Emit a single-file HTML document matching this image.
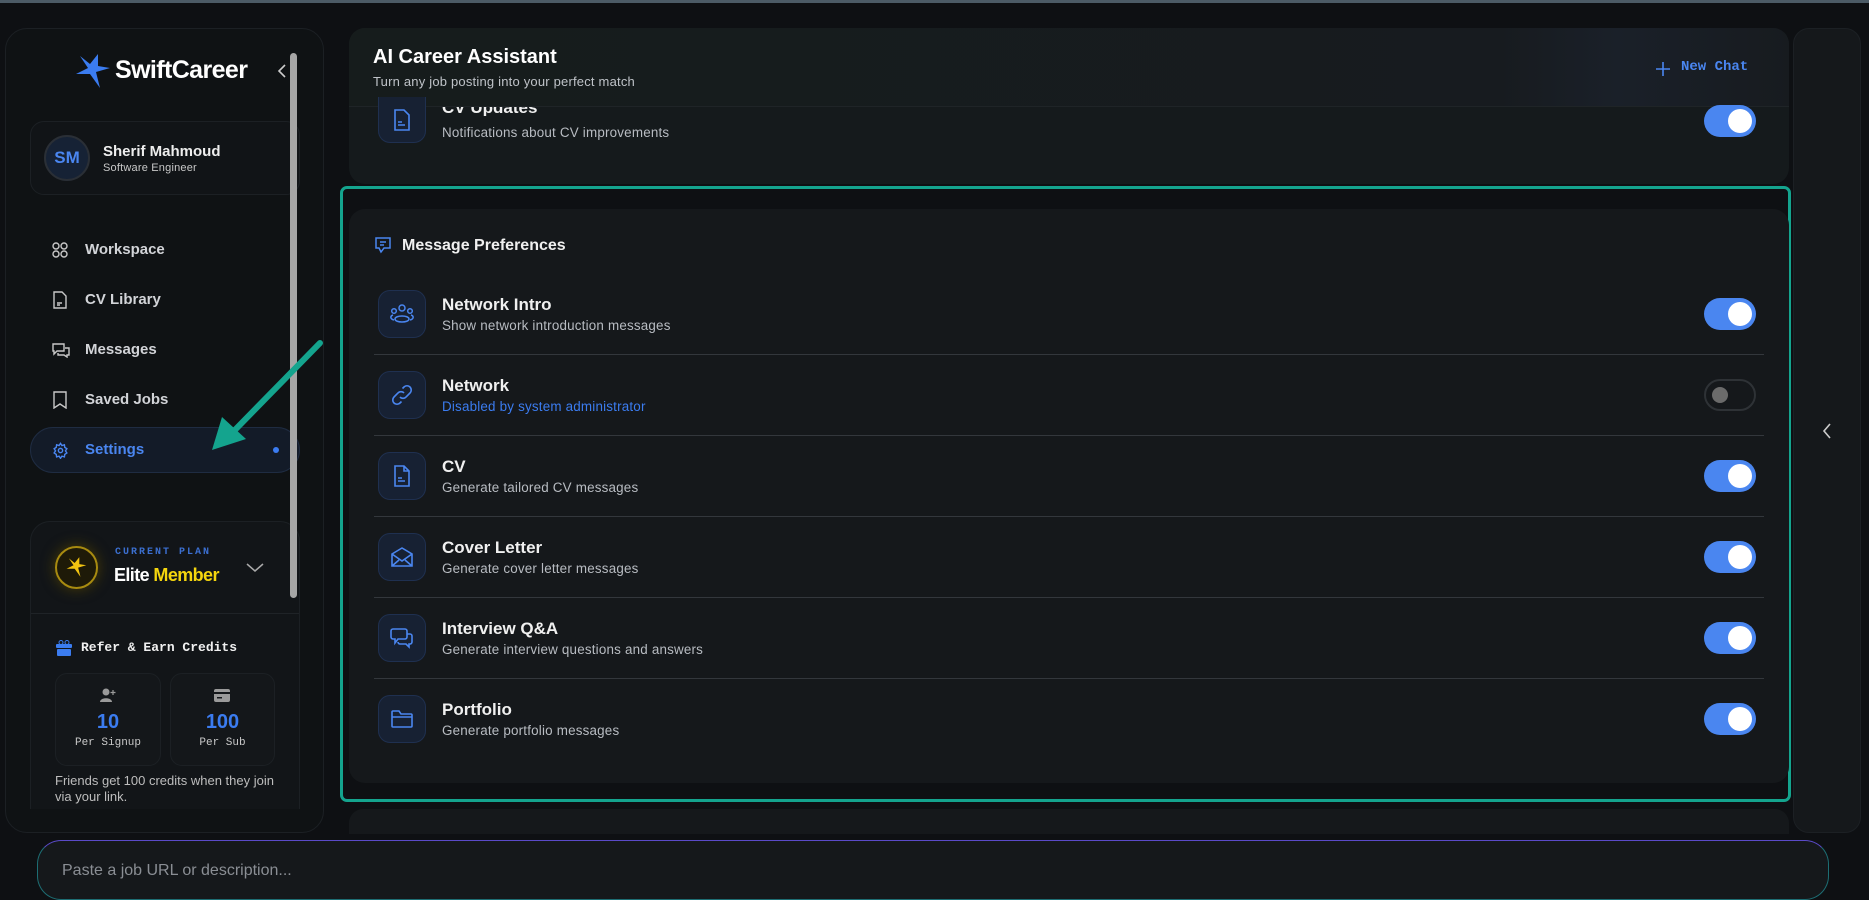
<!DOCTYPE html>
<html><head><meta charset="utf-8"><style>
*{box-sizing:border-box;margin:0;padding:0}
body{width:1869px;height:879px;overflow:hidden;background:#0e1013;font-family:"Liberation Sans",sans-serif;color:#e8e8e8;position:relative}
.a{position:absolute}
.mono{font-family:"Liberation Mono",monospace}
.card{background:#15181b;border-radius:16px}
.ib{position:absolute;left:378px;width:48px;height:48px;border-radius:12px;background:#172133;border:1px solid #1f3050;display:flex;align-items:center;justify-content:center}
.ttl{position:absolute;left:442px;font-size:17px;font-weight:bold;color:#f0f0f0}
.dsc{position:absolute;left:442px;font-size:13.4px;color:#b8bcc2;letter-spacing:0.2px}
.tg{position:absolute;left:1704px;width:52px;height:32px;border-radius:16px;background:#4a86f0}
.tg::after{content:"";position:absolute;right:4px;top:4px;width:24px;height:24px;border-radius:50%;background:#fff}
.dv{position:absolute;left:374px;width:1390px;height:1px;background:#33373c}
.nav{position:absolute;left:85px;font-size:15px;font-weight:bold;color:#d2d4d8}
.ni{position:absolute;left:52px}
</style></head><body>
<div class="a" style="left:0;top:0;width:1869px;height:3px;background:#4c5b66"></div>

<!-- sidebar -->
<div class="a" style="left:5px;top:28px;width:319px;height:805px;border-radius:22px;background:#0f1214;border:1px solid #1c2024"></div>
<svg class="a" style="left:76px;top:52px" width="36" height="38" viewBox="0 0 36 38"><path d="M4 4 L14 12 L22 2 L22 14 L34 16 L20 20 L24 36 L14 22 L0 22 L12 16 Z" fill="#3b7cf0"/></svg>
<div class="a" style="left:115px;top:56px;font-size:25px;font-weight:bold;color:#fff;letter-spacing:-0.6px">SwiftCareer</div>
<svg class="a" style="left:276px;top:63px" width="12" height="16"><path d="M9 2 L3 8 L9 14" stroke="#ccc" stroke-width="1.6" fill="none"/></svg>

<div class="a" style="left:30px;top:121px;width:270px;height:74px;border-radius:14px;background:#111417;border:1px solid #1c2024"></div>
<div class="a" style="left:44px;top:135px;width:46px;height:46px;border-radius:50%;background:#162235;border:2px solid #2a2f36;color:#4a86f0;font-size:17px;font-weight:bold;display:flex;align-items:center;justify-content:center">SM</div>
<div class="a" style="left:103px;top:143px;font-size:15px;font-weight:bold;color:#eee">Sherif Mahmoud</div>
<div class="a" style="left:103px;top:162px;font-size:11px;color:#c8c8c8;letter-spacing:0.2px">Software Engineer</div>

<svg class="ni" style="top:242px" width="16" height="16" fill="none" stroke="#c8c8c8" stroke-width="1.4"><circle cx="4" cy="4" r="3"/><circle cx="12" cy="4" r="3"/><circle cx="4" cy="12" r="3"/><circle cx="12" cy="12" r="3"/></svg>
<div class="nav" style="top:241px">Workspace</div>
<svg class="ni" style="top:291px" width="16" height="18" fill="none" stroke="#c8c8c8" stroke-width="1.4"><path d="M2 1h8l4 4v12H2z M5 12h5 M5 14h3"/></svg>
<div class="nav" style="top:291px">CV Library</div>
<svg class="ni" style="top:342px" width="18" height="16" fill="none" stroke="#c8c8c8" stroke-width="1.4"><path d="M1 2h11v7H5l-3 3V9H1z M6 11v2h6l3 2v-2h2V6h-4"/></svg>
<div class="nav" style="top:341px">Messages</div>
<svg class="ni" style="top:391px" width="16" height="18" fill="none" stroke="#c8c8c8" stroke-width="1.4"><path d="M2 1h12v16l-6-4-6 4z"/></svg>
<div class="nav" style="top:391px">Saved Jobs</div>
<div class="a" style="left:30px;top:427px;width:270px;height:46px;border-radius:23px;background:#131b28;border:1px solid #1f2c42"></div>
<svg class="ni" style="top:442px" width="17" height="17" viewBox="0 0 24 24" fill="none" stroke="#4a86f0" stroke-width="2"><circle cx="12" cy="12" r="3"/><path d="M12 2l2 3 3.5-1 .5 3.5 3 2-2 3 2 3-3 2-.5 3.5-3.5-1-2 3-2-3-3.5 1-.5-3.5-3-2 2-3-2-3 3-2 .5-3.5 3.5 1z"/></svg>
<div class="nav" style="top:441px;color:#4a86f0">Settings</div>
<div class="a" style="left:273px;top:447px;width:6px;height:6px;border-radius:50%;background:#3b7cf0"></div>

<!-- plan card -->
<div class="a" style="left:30px;top:521px;width:270px;height:288px;border-radius:20px 20px 0 0;background:#121518;border:1px solid #1c2024;border-bottom:none"></div>
<div class="a" style="left:31px;top:613px;width:268px;height:1px;background:#1f2327"></div>
<div class="a" style="left:55px;top:546px;width:43px;height:43px;border-radius:50%;border:2px solid #a88b10;background:#1e1a08;box-shadow:0 0 14px #4a3d05"></div>
<svg class="a" style="left:66px;top:556px" width="22" height="22" viewBox="0 0 36 38"><path d="M4 4 L14 12 L22 2 L22 14 L34 16 L20 20 L24 36 L14 22 L0 22 L12 16 Z" fill="#f2c410"/></svg>
<div class="a mono" style="left:115px;top:547px;font-size:10px;letter-spacing:2px;color:#3b6fd0;font-weight:bold">CURRENT PLAN</div>
<div class="a" style="left:114px;top:565px;font-size:18px;font-weight:bold;letter-spacing:-0.6px"><span style="color:#fff">Elite </span><span style="color:#f5d60e">Member</span></div>
<svg class="a" style="left:246px;top:563px" width="18" height="10"><path d="M1 1l8 7 8-7" stroke="#aaa" stroke-width="1.5" fill="none"/></svg>
<svg class="a" style="left:56px;top:640px" width="16" height="16" fill="#3b7cf0"><rect x="0" y="4" width="16" height="4" rx="1"/><rect x="1" y="9" width="14" height="7" rx="1"/><circle cx="5" cy="2.5" r="2" fill="none" stroke="#3b7cf0"/><circle cx="11" cy="2.5" r="2" fill="none" stroke="#3b7cf0"/></svg>
<div class="a mono" style="left:81px;top:640px;font-size:13px;font-weight:bold;color:#f0f0f0">Refer &amp; Earn Credits</div>
<div class="a" style="left:55px;top:673px;width:106px;height:93px;border-radius:12px;background:#14171a;border:1px solid #1c2024"></div>
<div class="a" style="left:170px;top:673px;width:105px;height:93px;border-radius:12px;background:#14171a;border:1px solid #1c2024"></div>
<svg class="a" style="left:100px;top:688px" width="16" height="14" fill="#9a9a9a"><circle cx="6" cy="4" r="3.5"/><path d="M0 14c0-5 12-5 12 0z"/><path d="M13 2v5M10.5 4.5h5" stroke="#9a9a9a" stroke-width="1.2"/></svg>
<svg class="a" style="left:214px;top:689px" width="16" height="13"><rect width="16" height="13" rx="2" fill="#9a9a9a"/><rect y="3" width="16" height="2" fill="#14171a"/><rect x="3" y="8" width="5" height="1.5" fill="#14171a"/></svg>
<div class="a" style="left:55px;top:711px;width:106px;text-align:center;font-size:20px;font-weight:bold;color:#3b7cf0">10</div>
<div class="a" style="left:170px;top:711px;width:105px;text-align:center;font-size:20px;font-weight:bold;color:#3b7cf0">100</div>
<div class="a mono" style="left:55px;top:737px;width:106px;text-align:center;font-size:11px;color:#c8c8c8">Per Signup</div>
<div class="a mono" style="left:170px;top:737px;width:105px;text-align:center;font-size:11px;color:#c8c8c8">Per Sub</div>
<div class="a" style="left:55px;top:773px;width:225px;font-size:13px;line-height:16px;color:#bdbdbd">Friends get 100 credits when they join via your link.</div>

<div class="a" style="left:290px;top:53px;width:7px;height:545px;border-radius:4px;background:#a6a6a6"></div>

<!-- main header card -->
<div class="a card" style="left:349px;top:28px;width:1440px;height:156px;background:#151a1c"></div>
<div class="a" style="left:349px;top:28px;width:1440px;height:79px;border-radius:16px 16px 0 0;background:linear-gradient(90deg,#161c1c,#171b1f 80%,#1a2029 88%,#171b1f);border-bottom:1px solid #1f2427"></div>
<div class="a" style="left:373px;top:46px;font-size:20px;font-weight:bold;color:#fff">AI Career Assistant</div>
<div class="a" style="left:373px;top:74px;font-size:13px;color:#bfc3c8;letter-spacing:0.2px">Turn any job posting into your perfect match</div>
<svg class="a" style="left:1655px;top:61px" width="16" height="16"><path d="M8 1v14M1 8h14" stroke="#4a86f0" stroke-width="1.6"/></svg>
<div class="a mono" style="left:1681px;top:59px;font-size:14px;font-weight:bold;color:#4a86f0">New Chat</div>
<div class="ib" style="top:97px;height:46px;border-top:none;border-radius:0 0 12px 12px"><svg width="18" height="22" fill="none" stroke="#4a86f0" stroke-width="1.6"><path d="M2 1h9l5 5v15H2z M5 16h7 M5 13h4"/></svg></div>
<div class="a" style="left:442px;top:107px;width:200px;height:9px;overflow:hidden"><div style="margin-top:-9px;font-size:17px;font-weight:bold;color:#f0f0f0">CV Updates</div></div>
<div class="dsc" style="top:125px">Notifications about CV improvements</div>
<div class="tg" style="top:105px"></div>

<!-- teal highlight -->
<div class="a" style="left:340px;top:186px;width:1451px;height:616px;border:3px solid #14a48e;border-radius:7px"></div>
<div class="a card" style="left:349px;top:209px;width:1440px;height:574px"></div>
<svg class="a" style="left:374px;top:236px" width="18" height="18" fill="none" stroke="#4a86f0" stroke-width="1.5"><path d="M2 2h14v10H10l-3 4-2-4H2z M6 6h6 M6 9h4"/></svg>
<div class="a" style="left:402px;top:237px;font-size:16px;font-weight:bold;color:#f0f0f0">Message Preferences</div>

<!-- rows -->
<div class="ib" style="top:290px"><svg width="24" height="20" fill="none" stroke="#4a86f0" stroke-width="1.5"><circle cx="12" cy="4" r="3"/><circle cx="4" cy="7" r="2.3"/><circle cx="20" cy="7" r="2.3"/><path d="M5 15c0-4 14-4 14 0s-14 4-14 0z M3 11c-3 1-3 4 1 5 M21 11c3 1 3 4-1 5"/></svg></div>
<div class="ttl" style="top:295px">Network Intro</div><div class="dsc" style="top:318px">Show network introduction messages</div>
<div class="tg" style="top:298px"></div>
<div class="dv" style="top:354px"></div>

<div class="ib" style="top:371px"><svg width="22" height="22" fill="none" stroke="#4a86f0" stroke-width="1.6"><path d="M9 13a4 4 0 0 0 6 0l4-4a4 4 0 0 0-6-6l-1.5 1.5 M13 9a4 4 0 0 0-6 0l-4 4a4 4 0 0 0 6 6l1.5-1.5"/></svg></div>
<div class="ttl" style="top:376px">Network</div><div class="dsc" style="top:399px;color:#3b7cf0">Disabled by system administrator</div>
<div class="a" style="left:1704px;top:379px;width:52px;height:32px;border-radius:16px;background:#15181b;border:2px solid #2e3236"></div>
<div class="a" style="left:1712px;top:387px;width:16px;height:16px;border-radius:50%;background:#6b6b6b"></div>
<div class="dv" style="top:435px"></div>

<div class="ib" style="top:452px"><svg width="18" height="22" fill="none" stroke="#4a86f0" stroke-width="1.6"><path d="M2 1h9l5 5v15H2z M11 1v5h5 M5 16h7 M5 13h4"/></svg></div>
<div class="ttl" style="top:457px">CV</div><div class="dsc" style="top:480px">Generate tailored CV messages</div>
<div class="tg" style="top:460px"></div>
<div class="dv" style="top:516px"></div>

<div class="ib" style="top:533px"><svg width="24" height="22" fill="none" stroke="#4a86f0" stroke-width="1.6"><path d="M2 8l10-6 10 6v12H2z M2 8l10 7 10-7 M2 20l7-6 M22 20l-7-6"/></svg></div>
<div class="ttl" style="top:538px">Cover Letter</div><div class="dsc" style="top:561px">Generate cover letter messages</div>
<div class="tg" style="top:541px"></div>
<div class="dv" style="top:597px"></div>

<div class="ib" style="top:614px"><svg width="24" height="22" fill="none" stroke="#4a86f0" stroke-width="1.6"><path d="M3 2h12a2 2 0 0 1 2 2v6a2 2 0 0 1-2 2H8l-3 4v-4H3a2 2 0 0 1-2-2V4a2 2 0 0 1 2-2z M17 7h3a2 2 0 0 1 2 2v6a2 2 0 0 1-2 2h-1v3l-3-3h-6a2 2 0 0 1-2-2"/></svg></div>
<div class="ttl" style="top:619px">Interview Q&amp;A</div><div class="dsc" style="top:642px">Generate interview questions and answers</div>
<div class="tg" style="top:622px"></div>
<div class="dv" style="top:678px"></div>

<div class="ib" style="top:695px"><svg width="24" height="20" fill="none" stroke="#4a86f0" stroke-width="1.6"><path d="M2 3a1 1 0 0 1 1-1h6l2 3h10a1 1 0 0 1 1 1v11a1 1 0 0 1-1 1H3a1 1 0 0 1-1-1z M2 8h20"/></svg></div>
<div class="ttl" style="top:700px">Portfolio</div><div class="dsc" style="top:723px">Generate portfolio messages</div>
<div class="tg" style="top:703px"></div>

<!-- lower card -->
<div class="a" style="left:349px;top:809px;width:1440px;height:25px;border-radius:14px 14px 0 0;background:#15181b"></div>

<!-- right panel -->
<div class="a" style="left:1793px;top:28px;width:68px;height:805px;border-radius:16px;background:#15181b;border:1px solid #1c2024"></div>
<svg class="a" style="left:1821px;top:422px" width="12" height="18"><path d="M9 2L3 9l6 7" stroke="#ccc" stroke-width="1.6" fill="none"/></svg>

<!-- arrow -->
<svg class="a" style="left:200px;top:335px" width="130" height="125"><path d="M120 8 L30 100" stroke="#14a48e" stroke-width="6" stroke-linecap="round"/><path d="M12 115 L22 82 L46 104 Z" fill="#14a48e"/></svg>

<!-- input -->
<div class="a" style="left:37px;top:840px;width:1792px;height:60px;border-radius:24px;background:#15181b;border:1px solid #1d6e74;border-top:1.5px solid #5a4ac8"></div>
<div class="a" style="left:62px;top:862px;font-size:16px;color:#8a8e94">Paste a job URL or description...</div>
</body></html>
